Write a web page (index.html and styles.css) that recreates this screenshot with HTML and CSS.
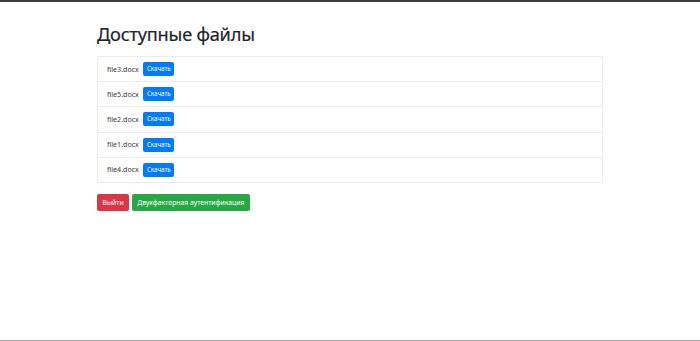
FILE: index.html
```html
<!DOCTYPE html>
<html lang="ru">
<head>
<meta charset="utf-8">
<title>Доступные файлы</title>
<link rel="stylesheet" href="styles.css">
</head>
<body>
<div class="page">
  <div class="container">
    <h1 class="title">Доступные файлы</h1>
    <ul class="list">
      <li class="item">file3.docx <a class="btn btn-sm btn-blue" href="#">Скачать</a></li>
      <li class="item">file5.docx <a class="btn btn-sm btn-blue" href="#">Скачать</a></li>
      <li class="item">file2.docx <a class="btn btn-sm btn-blue" href="#">Скачать</a></li>
      <li class="item">file1.docx <a class="btn btn-sm btn-blue" href="#">Скачать</a></li>
      <li class="item">file4.docx <a class="btn btn-sm btn-blue" href="#">Скачать</a></li>
    </ul>
    <div class="actions">
      <a class="btn btn-red" href="#">Выйти</a>
      <a class="btn btn-green" href="#">Двухфакторная аутентификация</a>
    </div>
  </div>
</div>
</body>
</html>
```
FILE: styles.css
```css
html {
  border-top: 2px solid #3c3c3c;
  background: #fff;
}
body {
  margin: 0;
  font-family: "Noto Sans", "Open Sans", sans-serif;
  color: #212529;
}
.page {
  min-height: calc(100vh - 3px);
  border-bottom: 1px solid #a3a0a6;
}
.container {
  width: 506px;
  margin: 0 auto 0 97px;
  padding-top: 21px;
}
.title {
  font-size: 18.2px;
  font-weight: 400;
  line-height: 22px;
  margin: 0 0 11px;
  letter-spacing: -0.2px;
  -webkit-text-stroke: 0.2px #212529;
}
.list {
  list-style: none;
  margin: 0;
  padding: 0;
  border: 1px solid #ececec;
  border-radius: 2px;
}
.item {
  padding: 5.5px 9px;
  font-size: 7.1px;
  line-height: 11px;
  height: 13.2px;
  display: flex;
  align-items: center;
  gap: 4.5px;
  color: #3a3a3a;
}
.item + .item {
  border-top: 1px solid #ececec;
}
.btn {
  display: inline-block;
  color: #fff;
  text-decoration: none;
  border-radius: 2px;
}
.btn-sm {
  font-size: 6.2px;
  line-height: 14px;
  padding: 0 3.5px;
  height: 14px;
}
.btn-blue {
  background: #007bff;
}
.actions {
  margin-top: 11px;
  display: flex;
  gap: 2.5px;
}
.actions .btn {
  font-size: 6.8px;
  font-weight: 400;
  line-height: 17px;
  height: 17px;
  padding: 0 5.5px;
}
.btn-red {
  background: #dc3545;
}
.btn-green {
  background: #28a745;
}
```
